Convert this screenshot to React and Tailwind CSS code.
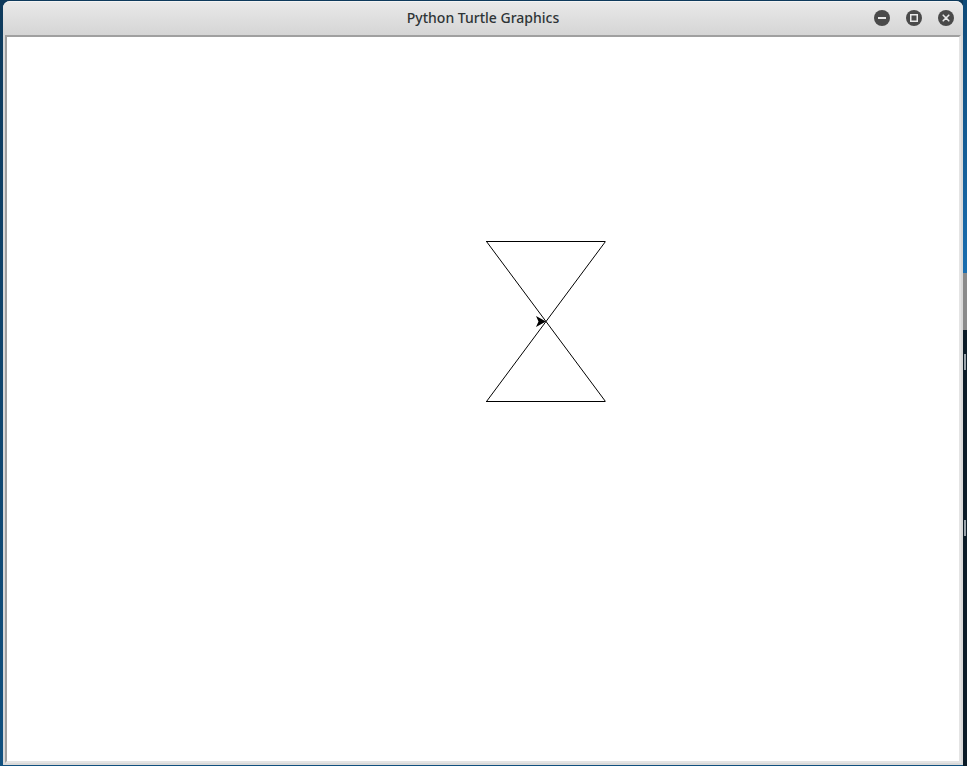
import React from "react";

function TitleButton({ kind }) {
  return (
    <div className="w-4 h-4 rounded-full bg-[#4a4a4a] flex items-center justify-center">
      <svg width="16" height="16" viewBox="0 0 16 16">
        {kind === "min" && <rect x="4" y="7" width="8" height="2" fill="#e8e8e8" />}
        {kind === "max" && (
          <rect x="4.75" y="4.75" width="6.5" height="6.5" fill="none" stroke="#e8e8e8" strokeWidth="1.5" />
        )}
        {kind === "close" && (
          <path d="M5.2 5.2 L10.8 10.8 M10.8 5.2 L5.2 10.8" stroke="#e8e8e8" strokeWidth="1.6" strokeLinecap="round" />
        )}
      </svg>
    </div>
  );
}

export default function App() {
  return (
    <div
      className="flex w-[967px] h-[766px] overflow-hidden bg-gradient-to-b from-[#0e3a5c] to-[#10507f]"
      style={{ fontFamily: '"Noto Sans", "Open Sans", sans-serif' }}
    >
      {/* window */}
      <div className="ml-[3px] mt-[1px] w-[960px] h-[764px] flex flex-col bg-[#d9d9d9] rounded-t-[7px]">
        {/* title bar */}
        <div className="h-[34px] flex items-center rounded-t-[7px] bg-gradient-to-b from-[#e9e9e9] to-[#d5d5d5] border-t border-[#f4f4f4]">
          <div className="w-[120px]" />
          <div className="flex-1 text-center text-[14px] font-medium text-[#2e3436] -mt-[3px]">
            Python Turtle Graphics
          </div>
          <div className="w-[120px] flex items-center justify-end gap-[16px] pr-[9px] -mt-[1px]">
            <TitleButton kind="min" />
            <TitleButton kind="max" />
            <TitleButton kind="close" />
          </div>
        </div>

        {/* canvas */}
        <div className="mx-[2px] mb-[2px] flex-1 border-2 border-t-[#a0a0a0] border-l-[#a0a0a0] border-r-[#e4e4e4] border-b-[#e4e4e4] bg-white">
          <svg width="952" height="724" viewBox="7 37 952 724" className="block">
            <g stroke="#000" strokeWidth="1" fill="none">
              <line x1="486" y1="241.5" x2="605" y2="241.5" shapeRendering="crispEdges" />
              <line x1="486" y1="401.5" x2="605" y2="401.5" shapeRendering="crispEdges" />
              <line x1="486.5" y1="241.5" x2="605.5" y2="401.5" />
              <line x1="605.5" y1="241.5" x2="486.5" y2="401.5" />
            </g>
            <polygon points="546,321.5 536,327 538.5,321.5 536,316" fill="#000" />
          </svg>
        </div>
      </div>

      {/* desktop peeking on the right */}
      <div className="flex-1 flex flex-col">
        <div className="h-[273px] bg-gradient-to-b from-[#0f4a78] to-[#1a6eb0]" />
        <div className="h-[57px] bg-[#8a8a8a]" />
        <div className="flex-1 bg-[#0b1b27] pt-[24px] pl-[1px] flex flex-col gap-[150px]">
          <div className="w-[2px] h-[16px] bg-[#9aa3aa]" />
          <div className="w-[2px] h-[16px] bg-[#9aa3aa]" />
        </div>
      </div>
    </div>
  );
}
